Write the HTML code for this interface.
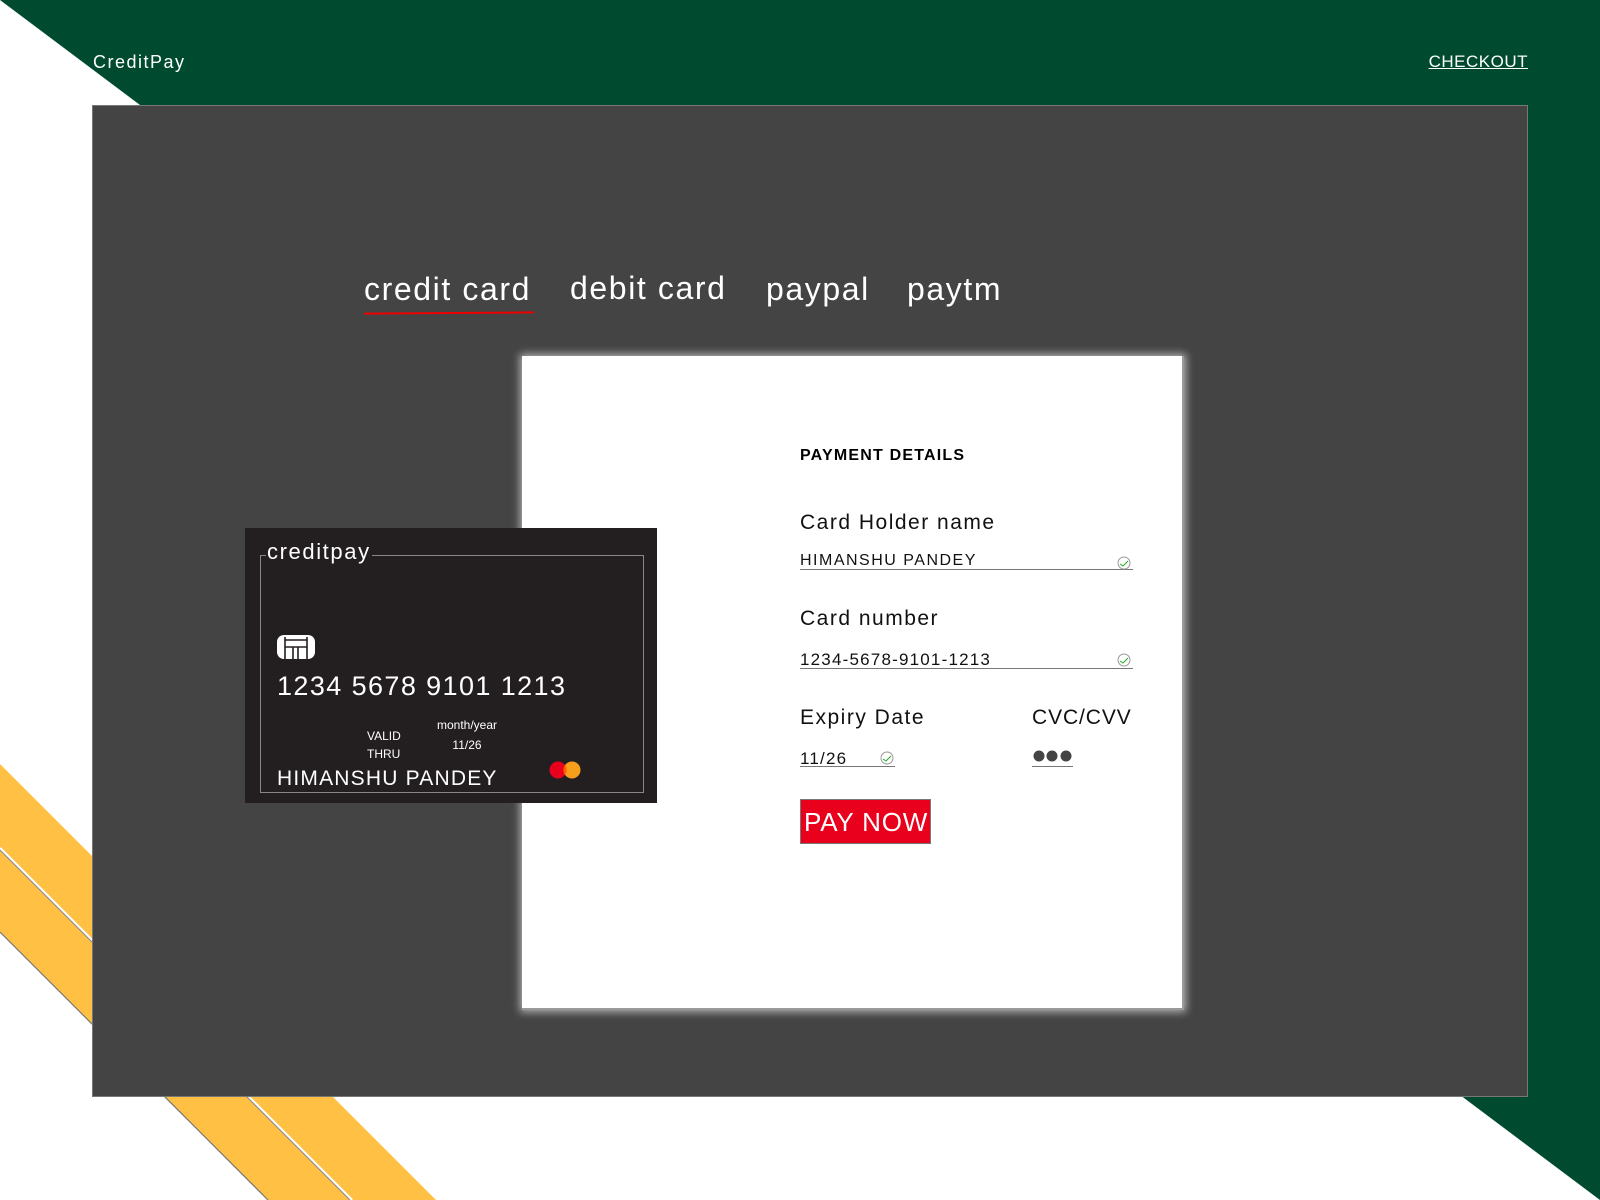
<!DOCTYPE html>
<html><head><meta charset="utf-8"><style>
*{margin:0;padding:0;box-sizing:border-box}
body{width:1600px;height:1200px;position:relative;overflow:hidden;background:#fff;font-family:"Liberation Sans",sans-serif}
.a{position:absolute;white-space:nowrap;line-height:1}
</style></head><body>
<svg class="a" style="left:0;top:0" width="1600" height="1200">
<polygon points="0,0 1600,0 1600,1200" fill="#004b30"/>
<polygon points="0,764 436,1200 268,1200 0,932" fill="#ffc043"/>
<line x1="0" y1="848" x2="352" y2="1200" stroke="#fff" stroke-width="2.5"/>
<line x1="0" y1="850" x2="350" y2="1200" stroke="#888" stroke-width="1"/>
<line x1="0" y1="932" x2="268" y2="1200" stroke="#777" stroke-width="1.2"/>
<rect x="92.5" y="105.5" width="1435" height="991" fill="#444" stroke="#777" stroke-width="1"/>
</svg>
<div class="a" style="left:93px;top:53px;font-size:18px;color:#fff;letter-spacing:1.5px">CreditPay</div>
<div class="a" style="right:72px;top:53px;font-size:17px;color:#fff;text-decoration:underline;letter-spacing:0.5px">CHECKOUT</div>

<div class="a" style="left:364px;top:273px;font-size:32px;color:#fff;letter-spacing:1.6px">credit card</div>
<div class="a" style="left:570px;top:272px;font-size:32px;color:#fff;letter-spacing:1.6px">debit card</div>
<div class="a" style="left:766px;top:273px;font-size:32px;color:#fff;letter-spacing:1.6px">paypal</div>
<div class="a" style="left:907px;top:273px;font-size:32px;color:#fff;letter-spacing:1.6px">paytm</div>
<div class="a" style="left:364px;top:312px;width:170px;height:2px;background:#e00;transform:rotate(-0.4deg)"></div>

<div class="a" style="left:522px;top:356px;width:662px;height:654px;background:#fff;box-shadow:0 0 8px 2px rgba(255,255,255,0.6);border-right:2px solid #999;border-bottom:2px solid #999"></div>

<div class="a" style="left:800px;top:448px;font-size:16px;font-weight:bold;color:#000;letter-spacing:1.2px">PAYMENT DETAILS</div>
<div class="a" style="left:800px;top:512px;font-size:21px;color:#111;letter-spacing:1.5px">Card Holder name</div>
<div class="a" style="left:800px;top:553px;font-size:16px;color:#111;letter-spacing:1.5px">HIMANSHU PANDEY</div>
<div class="a" style="left:800px;top:569px;width:333px;height:1px;background:#777"></div>
<div class="a" style="left:800px;top:608px;font-size:21px;color:#111;letter-spacing:1.5px">Card number</div>
<div class="a" style="left:800px;top:651px;font-size:17px;color:#111;letter-spacing:1.2px">1234-5678-9101-1213</div>
<div class="a" style="left:800px;top:668px;width:333px;height:1px;background:#777"></div>
<div class="a" style="left:800px;top:707px;font-size:21px;color:#111;letter-spacing:1.5px">Expiry Date</div>
<div class="a" style="left:1032px;top:707px;font-size:21px;color:#111;letter-spacing:0.9px">CVC/CVV</div>
<div class="a" style="left:800px;top:750px;font-size:17px;color:#111;letter-spacing:1.2px">11/26</div>
<div class="a" style="left:800px;top:766px;width:95px;height:1px;background:#777"></div>
<div class="a" style="left:1032px;top:766px;width:41px;height:1px;background:#777"></div>
<svg class="a" style="left:1030px;top:748px" width="46" height="16"><circle cx="9" cy="8" r="5.5" fill="#444"/><circle cx="22" cy="8" r="5.5" fill="#444"/><circle cx="36" cy="8" r="5.5" fill="#444"/></svg>
<svg class="a" style="left:1116px;top:556px" width="16" height="14"><circle cx="8" cy="7" r="6" fill="none" stroke="#999" stroke-width="1"/><path d="M4 8 L7 10 L12 5" fill="none" stroke="#2a2" stroke-width="1"/></svg>
<svg class="a" style="left:1116px;top:653px" width="16" height="14"><circle cx="8" cy="7" r="6" fill="none" stroke="#999" stroke-width="1"/><path d="M4 8 L7 10 L12 5" fill="none" stroke="#2a2" stroke-width="1"/></svg>
<svg class="a" style="left:879px;top:751px" width="16" height="14"><circle cx="8" cy="7" r="6" fill="none" stroke="#999" stroke-width="1"/><path d="M4 8 L7 10 L12 5" fill="none" stroke="#2a2" stroke-width="1"/></svg>
<div class="a" style="left:800px;top:799px;width:131px;height:45px;background:#e8001c;border:1px solid #777;color:#fff;font-size:26px;line-height:45px;padding-left:3px;letter-spacing:0.8px">PAY NOW</div>

<div class="a" style="left:245px;top:528px;width:412px;height:275px;background:#231f20"></div>
<div class="a" style="left:260px;top:555px;width:384px;height:238px;border:1px solid #888"></div>
<div class="a" style="left:266px;top:541px;font-size:22px;color:#fff;background:#231f20;padding:0 1px;letter-spacing:1.6px">creditpay</div>
<svg class="a" style="left:276px;top:634px" width="40" height="26"><rect x="1" y="1" width="38" height="24" rx="7" fill="#fff"/><path d="M9 3 V25 M31 3 V25 M9 6 H31 M9 13 H31 M17 13 V25 M22 13 V25" stroke="#231f20" stroke-width="1.6" fill="none"/></svg>
<div class="a" style="left:277px;top:673px;font-size:27px;color:#fff;letter-spacing:1.4px">1234 5678 9101 1213</div>
<div class="a" style="left:367px;top:727px;font-size:12px;color:#fff;line-height:18px">VALID<br>THRU</div>
<div class="a" style="left:430px;top:715px;width:74px;text-align:center;font-size:12px;color:#fff;line-height:20px">month/year<br>11/26</div>
<div class="a" style="left:277px;top:768px;font-size:21px;color:#fff;letter-spacing:1.2px">HIMANSHU PANDEY</div>
<svg class="a" style="left:548px;top:760px" width="36" height="20"><circle cx="10" cy="10" r="8.5" fill="#e8001c"/><circle cx="24" cy="10" r="8.5" fill="#f79e1b"/><path d="M17 5 A8.5 8.5 0 0 1 17 15 A8.5 8.5 0 0 1 17 5Z" fill="#ff5f00"/></svg>
</body></html>
